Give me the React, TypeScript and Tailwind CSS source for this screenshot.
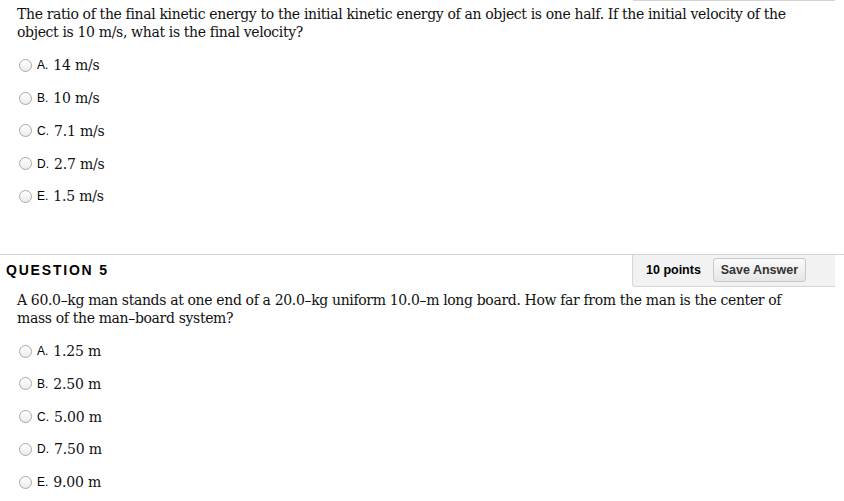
import React from "react";

const serif = "font-['DejaVu_Serif',serif]";
const sans = "font-['Liberation_Sans',Arial,sans-serif]";

function Radio() {
  return (
    <span className="inline-block w-[13px] h-[13px] rounded-full border border-[#a9a9a9] bg-gradient-to-b from-[#ffffff] to-[#ececec] shrink-0" />
  );
}

function Option({ letter, value }: { letter: string; value: string }) {
  return (
    <div className="flex items-center h-[32.75px] pl-[19px]">
      <Radio />
      <span className={`${sans} text-[12px] text-black ml-[5px] leading-none`}>{letter}.</span>
      <span className={`${serif} text-[14px] tracking-[-0.2px] text-[#111] ml-[5px] leading-none`}>{value}</span>
    </div>
  );
}

export default function App() {
  const q4 = ["14 m/s", "10 m/s", "7.1 m/s", "2.7 m/s", "1.5 m/s"];
  const q5 = ["1.25 m", "2.50 m", "5.00 m", "7.50 m", "9.00 m"];
  const letters = ["A", "B", "C", "D", "E"];
  return (
    <div className="w-[844px] h-[501px] bg-white overflow-hidden relative">
      <div className="flex justify-end pr-[9px]">
        <div className="w-[202px] h-px bg-[#d4d4d4]" />
      </div>
      <div className={`${serif} text-[14px] tracking-[-0.35px] leading-[18px] text-[#111] pl-[17px] pr-[40px] pt-[4px]`}>
        The ratio of the final kinetic energy to the initial kinetic energy of an object is one half. If the initial velocity of the object is 10 m/s, what is the final velocity?
      </div>
      <div className="mt-[8px]">
        {q4.map((v, i) => (
          <Option key={v} letter={letters[i]} value={v} />
        ))}
      </div>
      <div className="mt-[41px] border-t border-[#d4d4d4] flex items-stretch h-[33px]">
        <div className={`${sans} flex-1 flex items-center pl-[6px] text-[14px] font-bold tracking-[1.8px] text-black`}>
          QUESTION 5
        </div>
        <div className="w-[203px] mr-[9px] bg-[#f2f2f2] border-l border-b border-[#d6d6d6] rounded-bl-[3px] flex items-center pl-[13px]">
          <span className={`${sans} text-[12.5px] font-bold text-black`}>10 points</span>
          <button className={`${sans} ml-[12px] h-[24px] w-[93px] rounded-[3px] border border-[#c8c8c8] bg-gradient-to-b from-[#fafafa] to-[#e6e6e6] text-[12.5px] font-bold text-[#333]`}>
            Save Answer
          </button>
        </div>
      </div>
      <div className={`${serif} text-[14px] tracking-[-0.35px] leading-[18px] text-[#111] pl-[17px] pr-[40px] pt-[4px]`}>
        A 60.0–kg man stands at one end of a 20.0–kg uniform 10.0–m long board. How far from the man is the center of mass of the man–board system?
      </div>
      <div className="mt-[8px]">
        {q5.map((v, i) => (
          <Option key={v} letter={letters[i]} value={v} />
        ))}
      </div>
    </div>
  );
}
